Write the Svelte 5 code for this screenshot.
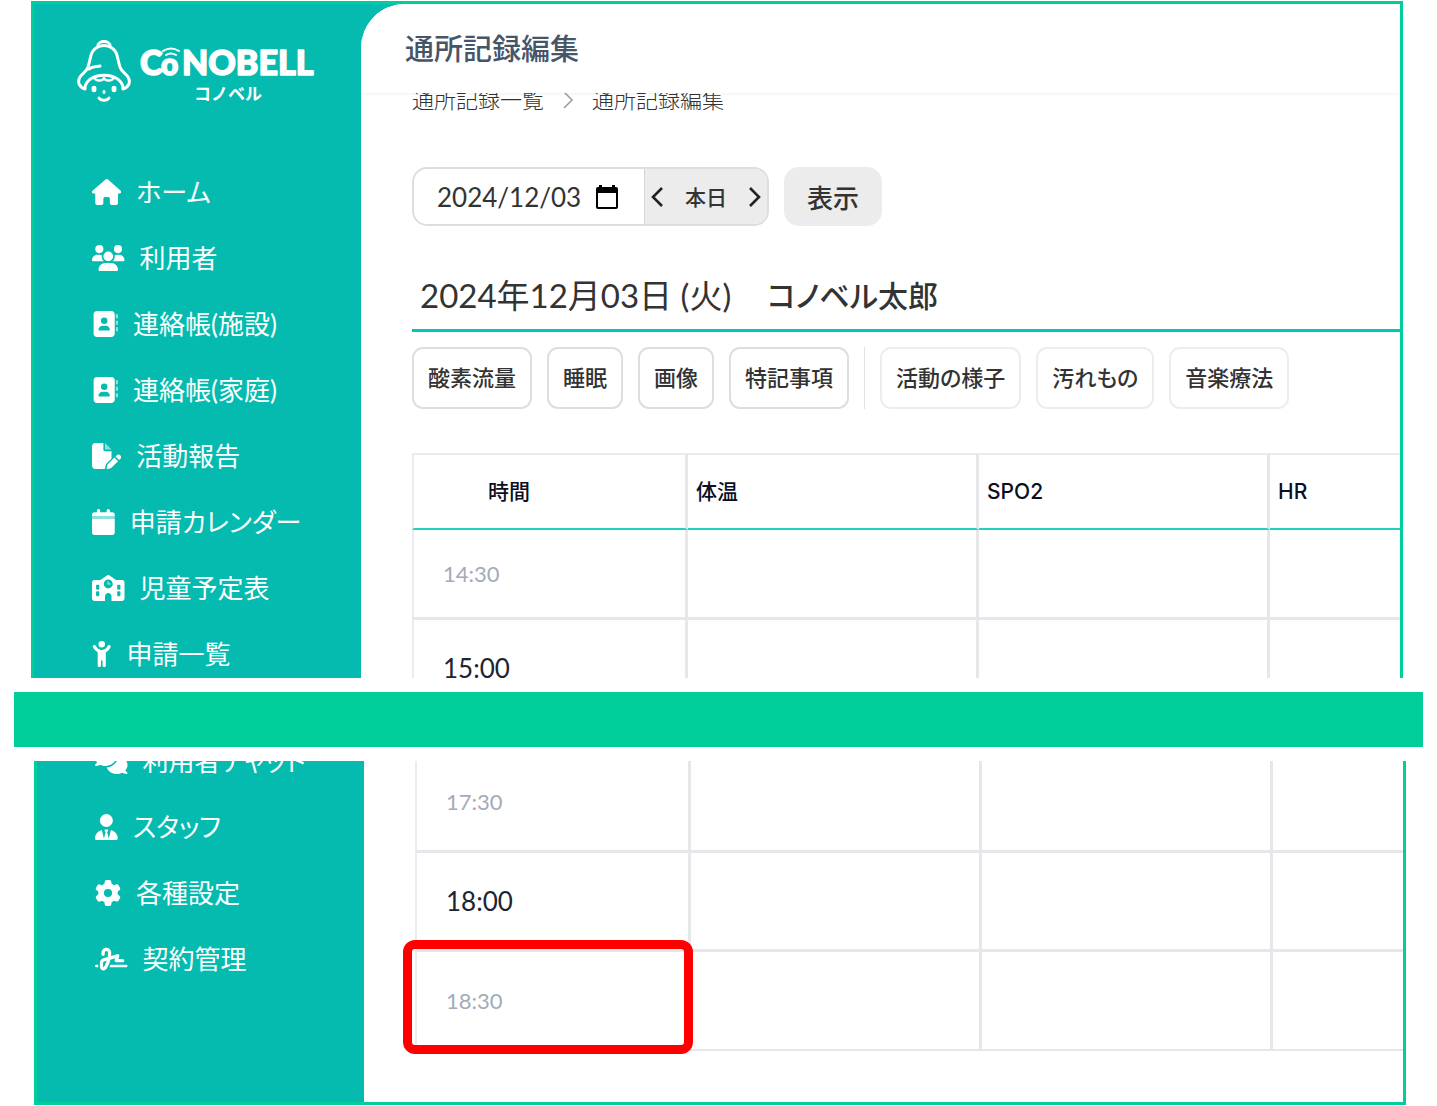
<script lang="ts">
	type Icon = { w: number; d: string; faded?: string };

	const icons: Record<string, Icon> = {
		house: {
			w: 576,
			d: 'M575.8 255.5c0 18-15 32.1-32 32.1l-32 0 .7 160.2c0 2.7-.2 5.4-.5 8.1l0 16.2c0 22.1-17.9 40-40 40l-16 0c-1.1 0-2.2 0-3.3-.1c-1.4 .1-2.8 .1-4.2 .1L416 512l-24 0c-22.1 0-40-17.9-40-40l0-24 0-64c0-17.7-14.3-32-32-32l-64 0c-17.7 0-32 14.3-32 32l0 64 0 24c0 22.1-17.9 40-40 40l-24 0-31.9 0c-1.5 0-3-.1-4.5-.2c-1.2 .1-2.4 .2-3.6 .2l-16 0c-22.1 0-40-17.9-40-40l0-112c0-.9 0-1.9 .1-2.8l0-69.7-32 0c-18 0-32-14-32-32.1c0-9 3-17 10-24L266.4 8c7-7 15-8 22-8s15 2 21 7L564.8 231.5c8 7 12 15 11 24z'
		},
		users: {
			w: 640,
			d: 'M144 0a80 80 0 1 1 0 160A80 80 0 1 1 144 0zM512 0a80 80 0 1 1 0 160A80 80 0 1 1 512 0zM0 298.7C0 239.8 47.8 192 106.7 192l42.7 0c15.9 0 31 3.5 44.6 9.7c-1.3 7.2-1.9 14.7-1.9 22.3c0 38.2 16.8 72.5 43.3 96c-.2 0-.4 0-.7 0L21.3 320C9.6 320 0 310.4 0 298.7zM405.3 320c-.2 0-.4 0-.7 0c26.6-23.5 43.3-57.8 43.3-96c0-7.6-.7-15-1.9-22.3c13.6-6.3 28.7-9.7 44.6-9.7l42.7 0C592.2 192 640 239.8 640 298.7c0 11.8-9.6 21.3-21.3 21.3l-213.3 0zM224 224a96 96 0 1 1 192 0 96 96 0 1 1 -192 0zM128 485.3C128 411.7 187.7 352 261.3 352l117.3 0C452.3 352 512 411.7 512 485.3c0 14.7-11.9 26.7-26.7 26.7l-330.7 0c-14.7 0-26.7-11.9-26.7-26.7z'
		},
		book: {
			w: 512,
			d: 'M96 0C60.7 0 32 28.7 32 64l0 384c0 35.3 28.7 64 64 64l288 0c35.3 0 64-28.7 64-64l0-384c0-35.3-28.7-64-64-64L96 0zM208 288l64 0c44.2 0 80 35.8 80 80c0 8.8-7.2 16-16 16l-192 0c-8.8 0-16-7.2-16-16c0-44.2 35.8-80 80-80zm-32-96a64 64 0 1 1 128 0 64 64 0 1 1 -128 0z',
			faded: 'M470 64h42v80h-42zM470 192h42v80h-42zM470 320h42v80h-42z'
		},
		report: {
			w: 576,
			d: 'M64 0C28.7 0 0 28.7 0 64L0 448c0 35.3 28.7 64 64 64l192 0c-1-6 0-12 1-18l15-60c4-14 11-27 21-37l91-91 0-146-128 0c-17.7 0-32-14.3-32-32L224 0 64 0zM549.8 235.7l14.4 14.4c15.6 15.6 15.6 40.9 0 56.6l-29.4 29.4-71-71 29.4-29.4c15.6-15.6 40.9-15.6 56.6 0zM311.9 417L441.1 287.8l71 71L382.9 487.9c-4.1 4.1-9.2 7-14.9 8.4l-60.1 15c-5.5 1.4-11.2-.2-15.2-4.2s-5.6-9.7-4.2-15.2l15-60.1c1.4-5.6 4.3-10.8 8.4-14.8z',
			faded: 'M256 0V128H384z'
		},
		calendar: {
			w: 448,
			d: 'M96 32l0 32L48 64C21.5 64 0 85.5 0 112l0 24 448 0 0-24c0-26.5-21.5-48-48-48l-48 0 0-32c0-17.7-14.3-32-32-32s-32 14.3-32 32l0 32L160 64l0-32c0-17.7-14.3-32-32-32S96 14.3 96 32zM448 192L0 192 0 464c0 26.5 21.5 48 48 48l352 0c26.5 0 48-21.5 48-48l0-272z',
			faded: 'M0 136H448V192H0z'
		},
		school: {
			w: 640,
			d: 'M337.8 5.4C327-1.8 313-1.8 302.2 5.4L166.3 96 48 96C21.5 96 0 117.5 0 144L0 464c0 26.5 21.5 48 48 48l208 0 0-96c0-35.3 28.7-64 64-64s64 28.7 64 64l0 96 208 0c26.5 0 48-21.5 48-48l0-320c0-26.5-21.5-48-48-48L473.7 96 337.8 5.4zM96 192l32 0c8.8 0 16 7.2 16 16l0 64c0 8.8-7.2 16-16 16l-32 0c-8.8 0-16-7.2-16-16l0-64c0-8.8 7.2-16 16-16zm400 16c0-8.8 7.2-16 16-16l32 0c8.8 0 16 7.2 16 16l0 64c0 8.8-7.2 16-16 16l-32 0c-8.8 0-16-7.2-16-16l0-64zM96 320l32 0c8.8 0 16 7.2 16 16l0 64c0 8.8-7.2 16-16 16l-32 0c-8.8 0-16-7.2-16-16l0-64c0-8.8 7.2-16 16-16zm400 16c0-8.8 7.2-16 16-16l32 0c8.8 0 16 7.2 16 16l0 64c0 8.8-7.2 16-16 16l-32 0c-8.8 0-16-7.2-16-16l0-64zM232 176a88 88 0 1 1 176 0 88 88 0 1 1 -176 0z',
			faded: 'M320 128c-8.8 0-16 7.2-16 16l0 32c0 8.8 7.2 16 16 16l32 0c8.8 0 16-7.2 16-16s-7.2-16-16-16l-16 0 0-16c0-8.8-7.2-16-16-16z'
		},
		child: {
			w: 384,
			d: 'M256 64A64 64 0 1 0 128 64a64 64 0 1 0 128 0zM152.9 169.3c-23.7-8.4-44.5-24.3-58.8-45.8L74.6 94.2C64.8 79.5 45 75.6 30.2 85.4s-18.7 29.7-8.9 44.4L40.9 159c18.1 27.1 42.8 48.4 71.1 62.4L112 480c0 17.7 14.3 32 32 32s32-14.3 32-32l0-96 32 0 0 96c0 17.7 14.3 32 32 32s32-14.3 32-32l0-258.4c29.1-14.2 54.4-36.2 72.7-64.2l18.2-27.9c9.6-14.8 5.4-34.6-9.4-44.3s-34.6-5.5-44.3 9.4L291 122.4c-21.8 33.4-58.9 53.6-98.8 53.6c-12.6 0-24.9-2-36.6-5.8c-.9-.3-1.8-.7-2.7-.9z'
		},
		comments: {
			w: 640,
			d: 'M208 352c114.9 0 208-78.8 208-176S322.9 0 208 0S0 78.8 0 176c0 38.6 14.7 74.3 39.6 103.4c-3.5 9.4-8.7 17.7-14.2 24.7c-4.8 6.2-9.7 11-13.3 14.3c-1.8 1.6-3.3 2.9-4.3 3.7c-.5 .4-.9 .7-1.1 .8l-.2 .2C1 327.2-1.4 334.4 .8 340.9S9.1 352 16 352c21.8 0 43.8-5.6 62.1-12.5c9.2-3.5 17.8-7.4 25.2-11.4C134.1 343.3 169.8 352 208 352zM448 176c0 112.3-99.1 196.9-216.5 207C255.8 457.4 336.4 512 432 512c38.2 0 73.9-8.7 104.7-23.9c7.5 4 16 7.9 25.2 11.4c18.3 6.9 40.3 12.5 62.1 12.5c6.9 0 13.1-4.5 15.2-11.1c2.1-6.6-.2-13.8-5.8-17.9l-.2-.2c-.2-.2-.6-.4-1.1-.8c-1-.8-2.5-2-4.3-3.7c-3.6-3.3-8.5-8.1-13.3-14.3c-5.5-7-10.7-15.4-14.2-24.7c24.9-29 39.6-64.7 39.6-103.4c0-92.8-84.9-168.9-192.6-175.5c.4 5.1 .6 10.3 .6 15.5z'
		},
		staff: {
			w: 448,
			d: 'M224 256A128 128 0 1 1 224 0a128 128 0 1 1 0 256zM209.1 359.2l-18.6-31c-6.4-10.7 1.3-24.2 13.7-24.2L224 304l19.7 0c12.4 0 20.1 13.6 13.7 24.2l-18.6 31 33.4 123.9 39.5-161.2c77.2 12 136.3 78.8 136.3 159.4c0 17-13.8 30.7-30.7 30.7l-106.3 0-57.6 0L194.7 512l-57.3 0-106.6 0C13.8 512 0 498.2 0 481.3c0-80.6 59.1-147.3 136.3-159.4l39.5 161.2 33.4-123.9z'
		},
		gear: {
			w: 512,
			d: 'M495.9 166.6c3.2 8.7 .5 18.4-6.4 24.6l-43.3 39.4c1.1 8.3 1.7 16.8 1.7 25.4s-.6 17.1-1.7 25.4l43.3 39.4c6.9 6.2 9.6 15.9 6.4 24.6c-4.4 11.9-9.7 23.3-15.8 34.3l-4.7 8.1c-6.6 11-14 21.4-22.1 31.2c-5.9 7.2-15.7 9.6-24.5 6.8l-55.7-17.7c-13.4 10.3-28.2 18.9-44 25.4l-12.5 57.1c-2 9.1-9 16.3-18.2 17.8c-13.8 2.3-28 3.5-42.5 3.5s-28.7-1.2-42.5-3.5c-9.2-1.5-16.2-8.7-18.2-17.8l-12.5-57.1c-15.8-6.5-30.6-15.1-44-25.4L83.1 425.9c-8.8 2.8-18.6 .3-24.5-6.8c-8.1-9.8-15.5-20.2-22.1-31.2l-4.7-8.1c-6.1-11-11.4-22.4-15.8-34.3c-3.2-8.7-.5-18.4 6.4-24.6l43.3-39.4C64.6 273.1 64 264.6 64 256s.6-17.1 1.7-25.4L22.4 191.2c-6.9-6.2-9.6-15.9-6.4-24.6c4.4-11.9 9.7-23.3 15.8-34.3l4.7-8.1c6.6-11 14-21.4 22.1-31.2c5.9-7.2 15.7-9.6 24.5-6.8l55.7 17.7c13.4-10.3 28.2-18.9 44-25.4l12.5-57.1c2-9.1 9-16.3 18.2-17.8C227.3 1.2 241.5 0 256 0s28.7 1.2 42.5 3.5c9.2 1.5 16.2 8.7 18.2 17.8l12.5 57.1c15.8 6.5 30.6 15.1 44 25.4l55.7-17.7c8.8-2.8 18.6-.3 24.5 6.8c8.1 9.8 15.5 20.2 22.1 31.2l4.7 8.1c6.1 11 11.4 22.4 15.8 34.3zM256 336a80 80 0 1 0 0-160 80 80 0 1 0 0 160z'
		},
		signature: {
			w: 640,
			d: 'M192 128c0-17.7 14.3-32 32-32s32 14.3 32 32l0 7.8c0 27.7-2.4 55.3-7.1 82.5l-84.4 25.3c-40.6 12.2-68.4 49.6-68.4 92l0 71.9c0 40 32.5 72.5 72.5 72.5c26 0 50-13.9 62.9-36.5l13.9-24.3c26.8-47 46.5-97.7 58.4-150.5l94.4-28.3-12.5 37.5c-3.3 9.8-1.6 20.5 4.4 28.8s15.7 13.3 26 13.3l128 0c17.7 0 32-14.3 32-32s-14.3-32-32-32l-83.6 0 18-53.9c3.8-11.3 .9-23.8-7.4-32.4s-20.7-11.8-32.2-8.4L316.4 198.1c2.4-20.7 3.6-41.4 3.6-62.3l0-7.8c0-53-43-96-96-96s-96 43-96 96l0 32c0 17.7 14.3 32 32 32s32-14.3 32-32l0-32zm-9.2 177l49-14.7c-10.4 33.8-24.5 66.4-42.1 97.2l-13.9 24.3c-1.5 2.6-4.3 4.3-7.4 4.3c-4.7 0-8.5-3.8-8.5-8.5l0-71.9c0-14.1 9.3-26.6 22.8-30.7zM24 368c-13.3 0-24 10.7-24 24s10.7 24 24 24l40.3 0c-.2-2.8-.3-5.6-.3-8.5L64 368l-40 0zm592 48c13.3 0 24-10.7 24-24s-10.7-24-24-24l-310.1 0c-6.7 16.3-14.2 32.3-22.3 48L616 416z'
		}
	};

	const menuTop = [
		{ icon: 'house', label: 'ホーム' },
		{ icon: 'users', label: '利用者' },
		{ icon: 'book', label: '連絡帳(施設)' },
		{ icon: 'book', label: '連絡帳(家庭)' },
		{ icon: 'report', label: '活動報告' },
		{ icon: 'calendar', label: '申請カレンダー' },
		{ icon: 'school', label: '児童予定表' },
		{ icon: 'child', label: '申請一覧' }
	];
	const menuBottom = [
		{ icon: 'comments', label: '利用者チャット' },
		{ icon: 'staff', label: 'スタッフ' },
		{ icon: 'gear', label: '各種設定' },
		{ icon: 'signature', label: '契約管理' }
	];

	const records = ['酸素流量', '睡眠', '画像', '特記事項'];
	const extras = ['活動の様子', '汚れもの', '音楽療法'];
	const columns = ['体温', 'SPO2', 'HR'];

	let date = $state('2024/12/03');
</script>

{#snippet menu(items: { icon: string; label: string }[])}
	<nav class="menu">
		{#each items as item}
			{@const icon = icons[item.icon]}
			<a href="#menu">
				<svg class="icon" viewBox="0 0 {icon.w} 512" aria-hidden="true">
					<path fill-rule="evenodd" d={icon.d} />
					{#if icon.faded}<path d={icon.faded} opacity="0.55" />{/if}
				</svg>
				<span>{item.label}</span>
			</a>
		{/each}
	</nav>
{/snippet}

{#snippet row(time: string, marked: boolean)}
	<tr>
		<th scope="row" class="time" class:half={time.endsWith('30')}>
			{time}
			{#if marked}<span class="marker"></span>{/if}
		</th>
		{#each columns as _}
			<td></td>
		{/each}
	</tr>
{/snippet}

{#snippet cols()}
	<colgroup>
		<col class="col-time" />
		<col class="col-value" />
		<col class="col-value" />
		<col />
	</colgroup>
{/snippet}

<div class="page">
	<section class="panel upper">
		<aside class="sidebar">
			<svg class="logo" viewBox="0 0 244 66" role="img" aria-label="CoNOBELL コノベル">
				<g fill="none" stroke="#fff" stroke-width="3" stroke-linecap="round" stroke-linejoin="round">
					<path d="M21 6c0-6 12-6 12 0" stroke-width="3" />
					<path d="M8 49C2 47 0 42 3 37c2-4 6-4 8-10 3-9 2-15 8-19 5-3 11-3 16 0 6 4 5 10 8 19 2 6 6 6 8 10 3 5 1 10-5 12" />
					<path d="M8 48c1-17 37-17 38 0" />
					<path d="M12 29c4-3 7-2 11-3" />
					<path d="M17 37c1 4 8 5 10 1 2 4 9 3 10-1" stroke-width="2.4" />
					<path d="M22 58c2 3 8 3 10 0" />
				</g>
				<g fill="#fff">
					<ellipse cx="17" cy="49" rx="2.5" ry="3.2" />
					<ellipse cx="37" cy="49" rx="2.5" ry="3.2" />
					<ellipse cx="27" cy="52" rx="1.5" ry="2" />
					<text class="brand" x="63" y="35">C</text>
					<text class="brand small-o" x="84" y="35">o</text>
					<text class="brand" x="105" y="35">NOBELL</text>
					<text class="brand-kana" x="117" y="60">コノベル</text>
				</g>
				<g fill="none" stroke="#fff" stroke-width="2" stroke-linecap="round">
					<path d="M86 11q8-5 16 0" />
					<path d="M89 15q5-3 10 0" />
				</g>
			</svg>
			{@render menu(menuTop)}
		</aside>
		<main class="main">
			<header class="header"><h1>通所記録編集</h1></header>
			<div class="content">
				<div class="crumbs">
					<a href="#list">通所記録一覧</a>
					<svg viewBox="0 0 12 18" aria-hidden="true"><path d="M2 1l8 8-8 8" /></svg>
					<span>通所記録編集</span>
				</div>
				<div class="toolbar">
					<div class="date-group">
						<label class="date">
							<input type="text" aria-label="日付" bind:value={date} />
							<svg viewBox="0 0 22 24" aria-hidden="true">
								<path fill-rule="evenodd" d="M3 0h3v2h10V0h3v2h1a2 2 0 0 1 2 2v18a2 2 0 0 1-2 2H2a2 2 0 0 1-2-2V4a2 2 0 0 1 2-2h1zM2 8v14h18V8z" />
							</svg>
						</label>
						<div class="steps">
							<button type="button" aria-label="前日">
								<svg viewBox="0 0 12 20" aria-hidden="true"><path d="M11 1l-9 9 9 9" /></svg>
							</button>
							<button type="button" class="today">本日</button>
							<button type="button" aria-label="翌日">
								<svg viewBox="0 0 12 20" aria-hidden="true"><path d="M1 1l9 9-9 9" /></svg>
							</button>
						</div>
					</div>
					<button type="button" class="show">表示</button>
				</div>
				<h2 class="heading"><span>2024年12月03日 (火)</span><strong>コノベル太郎</strong></h2>
				<div class="chips">
					{#each records as label}
						<button type="button" class="chip">{label}</button>
					{/each}
					<span class="divider"></span>
					{#each extras as label}
						<button type="button" class="chip light">{label}</button>
					{/each}
				</div>
				<table class="grid">
					{@render cols()}
					<thead>
						<tr>
							<th class="time-head">時間</th>
							{#each columns as name}
								<th>{name}</th>
							{/each}
						</tr>
					</thead>
					<tbody class="scrolled">
						{@render row('14:30', false)}
						{@render row('15:00', false)}
					</tbody>
				</table>
			</div>
		</main>
	</section>

	<div class="band"></div>

	<section class="panel lower">
		<aside class="sidebar">
			{@render menu(menuBottom)}
		</aside>
		<div class="main">
			<div class="content">
				<table class="grid">
					{@render cols()}
					<tbody>
						{@render row('17:30', false)}
						{@render row('18:00', false)}
						{@render row('18:30', true)}
					</tbody>
				</table>
			</div>
		</div>
	</section>
</div>

<style>
	:global(body) {
		margin: 0;
		background: #fff;
	}
	.page {
		display: flex;
		flex-direction: column;
		gap: 14px;
		padding-top: 1px;
		font-family: Lato, 'Noto Sans CJK JP', sans-serif;
		color: #333;
	}
	button,
	input {
		font-family: inherit;
		color: inherit;
		margin: 0;
	}
	.panel {
		box-sizing: border-box;
		display: grid;
		grid-template-columns: 327px minmax(0, 1fr);
		border: 3px solid #00cf9b;
		background: #05bbb0;
		overflow: hidden;
	}
	.upper {
		height: 677px;
		margin: 0 34px 0 31px;
		border-bottom: 0;
	}
	/* scrolled to the end: the overflow is cut at the top */
	.lower {
		height: 344px;
		margin: 0 31px 0 34px;
		border-top: 0;
		align-content: end;
	}
	.band {
		height: 55px;
		margin: 0 14px;
		background: #00cf9b;
	}

	.sidebar {
		color: #fff;
	}
	.logo {
		display: block;
		width: 244px;
		height: 66px;
		margin: 36px 0 0 43px;
	}
	.brand {
		font-family: Lato, sans-serif;
		font-size: 34px;
		font-weight: 900;
		stroke: #fff;
		stroke-width: 1.5px;
		stroke-linejoin: round;
	}
	.small-o {
		font-size: 30px;
	}
	.brand-kana {
		font-family: 'Noto Sans CJK JP', sans-serif;
		font-size: 17px;
		font-weight: 700;
	}
	.menu {
		padding-left: 58px;
	}
	.upper .menu {
		padding-top: 53px;
	}
	.lower .menu {
		padding-bottom: 110px;
	}
	.menu a {
		display: flex;
		align-items: center;
		gap: 15px;
		height: 66px;
		color: #fff;
		font-size: 26px;
		line-height: 36px;
		font-feature-settings: 'palt';
		text-decoration: none;
		white-space: nowrap;
	}
	.icon {
		height: 26px;
		fill: #fff;
	}

	.main {
		background: #fff;
		min-width: 0;
	}
	.upper .main {
		border-top-left-radius: 44px;
	}
	.lower .main {
		display: flex;
		flex-direction: column;
		justify-content: flex-end;
	}
	.header {
		position: relative;
		box-sizing: border-box;
		height: 89px;
		padding: 0 44px;
		display: flex;
		align-items: center;
		background: #fff;
		border-top-left-radius: 44px;
		box-shadow: 0 2px 2px rgba(0, 0, 0, 0.04);
	}
	h1 {
		margin: 0;
		font-size: 29px;
		line-height: 40px;
		font-weight: 500;
		color: #475569;
	}
	.content {
		padding-left: 51px;
	}
	.lower .content {
		padding-bottom: 51px;
	}
	.crumbs {
		display: flex;
		align-items: center;
		gap: 18px;
		margin-top: -9px;
		font-size: 22px;
		line-height: 32px;
		font-weight: 300;
	}
	.crumbs a {
		color: inherit;
		text-decoration: none;
	}
	.crumbs svg {
		width: 12px;
		height: 18px;
		fill: none;
		stroke: #999;
		stroke-width: 1.5;
	}

	.toolbar {
		display: flex;
		gap: 15px;
		margin-top: 51px;
	}
	.date-group {
		box-sizing: border-box;
		display: flex;
		width: 357px;
		height: 59px;
		border: 2px solid #dcdee2;
		border-radius: 15px;
		overflow: hidden;
	}
	.date {
		display: flex;
		align-items: center;
		gap: 9px;
		padding-left: 23px;
	}
	.date input {
		width: 150px;
		padding: 0;
		border: 0;
		outline: 0;
		background: none;
		font-size: 26px;
	}
	.date svg {
		width: 22px;
		height: 24px;
		fill: #000;
	}
	.steps {
		flex: 1;
		display: flex;
		align-items: center;
		justify-content: space-between;
		margin-left: 26px;
		padding: 0 6px;
		border-left: 1px solid #d1d5db;
		background: #ececec;
	}
	.steps button {
		display: flex;
		padding: 0;
		border: 0;
		background: none;
	}
	.steps .today {
		font-size: 21px;
		line-height: 30px;
		font-weight: 500;
	}
	.steps svg {
		width: 12px;
		height: 20px;
		fill: none;
		stroke: #222;
		stroke-width: 2.6;
	}
	.show {
		width: 98px;
		border: 0;
		border-radius: 15px;
		background: #ececec;
		font-size: 26px;
		font-weight: 500;
	}

	.heading {
		display: flex;
		gap: 36px;
		margin: 34px 0 0;
		padding: 11px 8px 10px;
		border-bottom: 3px solid #00c9b7;
		font-size: 33px;
		line-height: 48px;
		font-weight: 400;
		font-feature-settings: 'palt';
		white-space: nowrap;
	}
	.heading strong {
		font-size: 30px;
		font-weight: 500;
	}

	.chips {
		display: flex;
		gap: 15px;
		margin-top: 15px;
	}
	.chip {
		height: 62px;
		padding: 0 14px;
		border: 2px solid #dcdee3;
		border-radius: 11px;
		background: #fff;
		font-size: 22px;
		line-height: 32px;
		font-weight: 500;
		font-feature-settings: 'palt';
		white-space: nowrap;
	}
	.chip.light {
		border-color: #ecedf0;
	}
	.divider {
		width: 1px;
		background: #e0e2e6;
	}

	.grid {
		width: 100%;
		table-layout: fixed;
		border-collapse: separate;
		border-spacing: 0;
	}
	.upper .grid {
		margin-top: 44px;
	}
	.col-time {
		width: 276px;
	}
	.col-value {
		width: 291px;
	}
	.grid th,
	.grid td {
		box-sizing: border-box;
		height: 99px;
		padding: 0 8px;
		border-right: 3px solid #e5e7eb;
		border-bottom: 3px solid #e5e7eb;
		text-align: left;
	}
	.grid tr > :first-child {
		border-left: 2px solid #e9ebee;
	}
	.grid tr > :last-child {
		border-right: 0;
	}
	.grid thead th {
		height: 77px;
		border-top: 2px solid #e9ebee;
		border-bottom: 2px solid #22cfc0;
		font-family: Inter, 'Noto Sans CJK JP', sans-serif;
		font-size: 21px;
		line-height: 32px;
		font-weight: 500;
		color: #0b0f1f;
	}
	.grid thead .time-head {
		padding-left: 74px;
	}
	.grid .scrolled tr:first-child > * {
		height: 90px;
	}
	.lower .grid tr:last-child > * {
		border-bottom-width: 2px;
	}
	.grid .time {
		position: relative;
		padding-left: 29px;
		font-size: 26px;
		line-height: 32px;
		font-weight: 400;
		color: #1f2430;
	}
	.grid .time.half {
		font-size: 22px;
		color: #a3abb8;
	}
	.marker {
		position: absolute;
		inset: -12px -5px -5px -14px;
		border: 9px solid #f00;
		border-radius: 12px;
	}
</style>
